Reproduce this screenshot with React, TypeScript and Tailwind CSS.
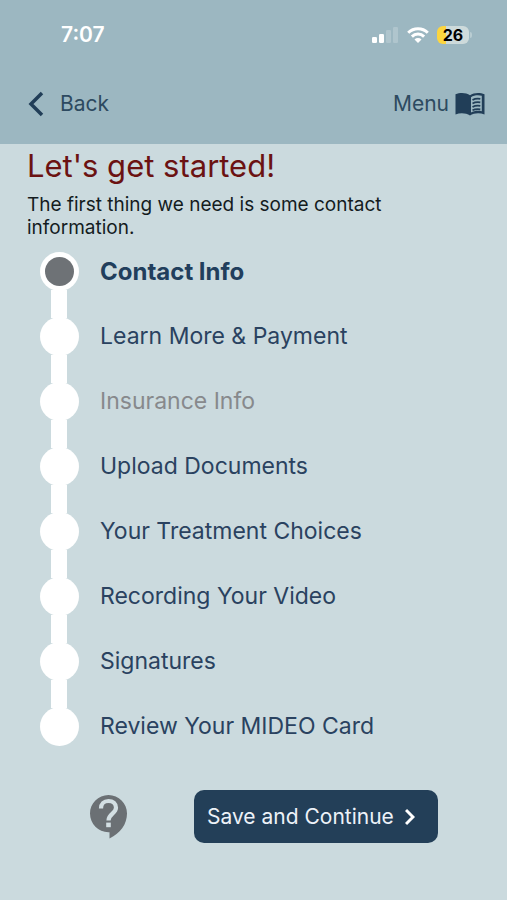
import React, { useState } from 'react';

interface Step {
  label: string;
  disabled?: boolean;
}

const steps: Step[] = [
  { label: 'Contact Info' },
  { label: 'Learn More & Payment' },
  { label: 'Insurance Info', disabled: true },
  { label: 'Upload Documents' },
  { label: 'Your Treatment Choices' },
  { label: 'Recording Your Video' },
  { label: 'Signatures' },
  { label: 'Review Your MIDEO Card' },
];

const BookIcon: React.FC = () => (
  <svg width="30" height="24" viewBox="0 0 30 24" aria-hidden="true">
    <path
      d="M.5 2.2C5 .4 11 .4 15 3.2 19 .4 25 .4 29.5 2.2v20.2c-4.5-1.6-10.5-1.6-14.5 1.1-4-2.7-10-2.7-14.5-1.1z"
      fill="#213e58"
    />
    <path d="M16 5.200c2.800-2 7.200-2.500 10.800-1.400v15.400c-3.600-.9-8-.4-10.800 1.200z" fill="#9cb7c1" />
    <g fill="none" stroke="#213e58" strokeWidth="1.8">
      <path d="M17.5 8c2.300-1.300 5-1.600 7.800-1.100" />
      <path d="M17.500 11.500c2.300-1.300 5-1.600 7.800-1.100" />
      <path d="M17.500 15c2.300-1.300 5-1.600 7.800-1.100" />
      <path d="M17.500 18.300c2.300-1.200 5-1.500 7.800-1" />
    </g>
  </svg>
);

const HelpIcon: React.FC = () => (
  <svg width="37" height="44" viewBox="0 0 37 44" aria-hidden="true">
    <path
      d="M18.500 0C8.300 0 0 8.300 0 18.600s8.300 18.600 18.500 18.600h1V43.500C30.500 38.500 37 29 37 18.600 37 8.300 28.700 0 18.500 0z"
      fill="#6b7074"
    />
    <path
      d="M11 13.500c0-4.700 3-7.500 7.500-7.500s7.500 2.800 7.500 6.800c0 5.600-7.500 6.200-7.500 12.600"
      fill="none"
      stroke="#d3dfe3"
      strokeWidth="4.2"
    />
    <rect x="16.2" y="27.6" width="4.6" height="4.6" fill="#d3dfe3" />
  </svg>
);

const StatusBar: React.FC = () => (
  <div className="flex h-[70px] items-center justify-between pl-[61px] pr-[35px]">
    <span className="text-[21px] font-semibold text-white">7:07</span>
    <div className="flex items-center gap-2">
      <svg width="27" height="18" viewBox="0 0 27 18" fill="#fff" aria-label="Signal">
        <rect x="0" y="11" width="5" height="6" rx="1.3" />
        <rect x="7" y="8" width="5" height="9" rx="1.3" />
        <rect x="14" y="4" width="5" height="13" rx="1.3" opacity="0.2" />
        <rect x="21" y="1" width="5" height="16" rx="1.3" opacity="0.2" />
      </svg>
      <svg width="22" height="18" viewBox="0 0 22 18" aria-label="Wi-Fi">
        <g fill="none" stroke="#fff" strokeWidth="3">
          <path d="M1.2 6.7a14 14 0 0 1 19.6 0" />
          <path d="M4.9 10.6a8.7 8.7 0 0 1 12.2 0" />
        </g>
        <path d="M11 17l-3.5-3.5a5 5 0 0 1 7 0z" fill="#fff" />
      </svg>
      <div className="flex items-center gap-px">
        <div className="flex h-[18px] w-8 items-center justify-center rounded-md bg-linear-to-r from-[#fcd53f] from-28% to-[#cddadb] to-28% text-base font-bold text-black">
          26
        </div>
        <div className="h-1.5 w-0.5 rounded-r-sm bg-[#b9cdd2]"></div>
      </div>
    </div>
  </div>
);

const App: React.FC = () => {
  const [current, setCurrent] = useState(0);

  return (
    <div className="min-h-screen bg-[#cbdade] font-['Inter',sans-serif]">
      {/* Header */}
      <header className="bg-[#9cb7c1] text-[#2d4a60]">
        <StatusBar />
        <nav className="flex h-[74px] items-start justify-between pl-7 pr-[22px] pt-[18px]">
          <button
            onClick={() => setCurrent(Math.max(current - 1, 0))}
            className="flex h-8 items-center gap-4 text-[21px]"
          >
            <svg width="16" height="26" viewBox="0 0 16 26" fill="none" stroke="#213e58" strokeWidth="3.5">
              <path d="M14 2L3 13l11 11" />
            </svg>
            Back
          </button>
          <button className="flex h-8 items-center gap-1.5 text-[21px]">
            Menu
            <BookIcon />
          </button>
        </nav>
      </header>

      {/* Main Content */}
      <main>
        <div className="px-[27px] pt-1">
          <h1 className="text-[31px] leading-9 text-[#6b1212]">Let's get started!</h1>
          <p className="mt-[9px] max-w-[380px] text-[19px] leading-[23px] text-[#141c1e]">
            The first thing we need is some contact information.
          </p>
        </div>

        <ol className="mt-3.5 pl-10">
          {steps.map((step, index) => (
            <li key={step.label} className="flex gap-[21px]">
              <div className="flex w-[39px] flex-col items-center">
                <span className="-my-px flex size-[39px] shrink-0 items-center justify-center rounded-full bg-white">
                  {index === current && <span className="size-[29px] rounded-full bg-[#6e7276]"></span>}
                </span>
                {index < steps.length - 1 && <span className="mr-px h-7 w-4 bg-white"></span>}
              </div>
              <button
                disabled={step.disabled}
                onClick={() => setCurrent(index)}
                className={`h-[37px] text-left ${
                  index === current
                    ? 'text-2xl font-bold text-[#213e5c]'
                    : step.disabled
                      ? 'text-[23px] text-[#87898c]'
                      : 'text-[23px] text-[#2a4260]'
                }`}
              >
                {step.label}
              </button>
            </li>
          ))}
        </ol>

        {/* Footer actions */}
        <div className="flex items-center gap-[67px] pb-14 pl-[90px] pt-[45px]">
          <button aria-label="Help">
            <HelpIcon />
          </button>
          <button
            onClick={() => setCurrent(Math.min(current + 1, steps.length - 1))}
            className="flex h-[53px] items-center gap-[11px] rounded-[10px] bg-[#233f58] pl-[13px] pr-[23px] text-[21px] text-[#edf2f8]"
          >
            Save and Continue
            <svg width="10" height="18" viewBox="0 0 10 18" fill="none" stroke="#fff" strokeWidth="3">
              <path d="M1 2l7 7-7 7" />
            </svg>
          </button>
        </div>
      </main>
    </div>
  );
};

export default App;
